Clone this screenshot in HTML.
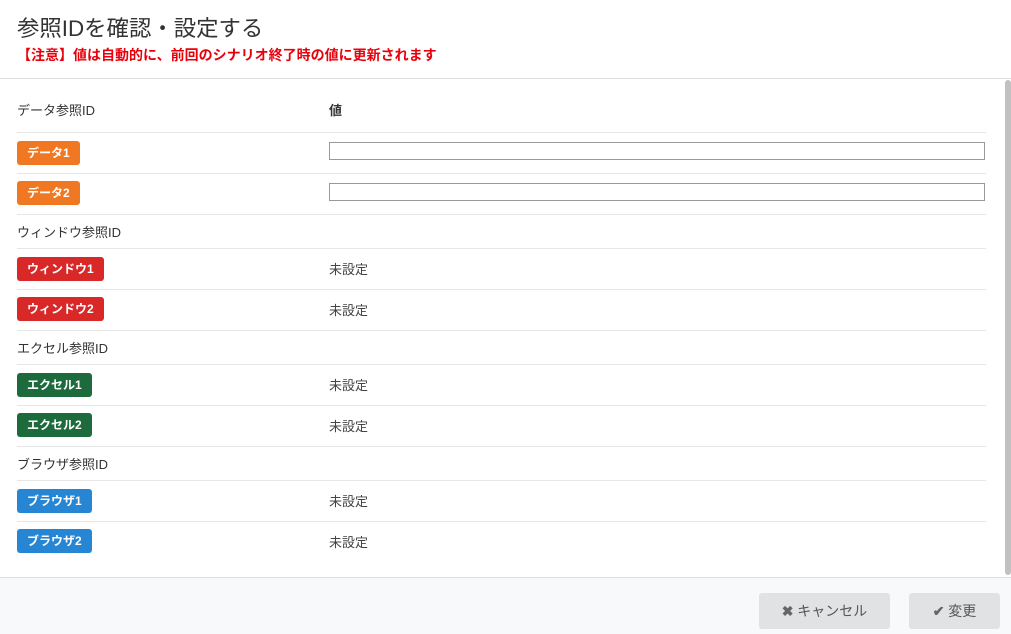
<!DOCTYPE html>
<html><head><meta charset="utf-8"><style>
*{box-sizing:border-box;margin:0;padding:0}
body{width:1011px;height:634px;overflow:hidden;background:#fff;font-family:"Liberation Sans","Noto Sans CJK JP",sans-serif;color:#333;position:relative}
.title{position:absolute;left:17px;top:11px;font-size:22.4px;color:#333}
.note{position:absolute;left:17px;top:45px;font-size:14px;font-weight:bold;color:#e8000b}
.hdr{position:absolute;left:0;top:78px;width:1011px;border-top:1px solid #dcdcdc}
.row{position:absolute;left:17px;width:969px;border-bottom:1px solid #e6e6e6;font-size:13px}
.row .v{position:absolute;left:312px;color:#444}
.badge{position:absolute;left:0;height:24px;line-height:24px;padding:0 10px;border-radius:3px;color:#fff;font-size:12px;font-weight:bold}
.o{background:#f07822}.r{background:#d92828}.g{background:#1d6b3d}.b{background:#2686d3}
.ta{position:absolute;left:312px;width:656px;height:18px;border:1px solid #999;background:#fff}
.foot{position:absolute;left:0;top:577px;width:1011px;height:57px;background:#f8f9fa;border-top:1px solid #dcdcdc}
.btn{position:absolute;top:15px;height:36px;background:#e1e2e4;border-radius:3px;font-size:14px;color:#555;text-align:center;line-height:36px}
.sb{position:absolute;left:1005px;top:80px;width:6px;height:495px;background:#c1c1c1;border-radius:3px}
</style></head><body>
<div class="title">参照IDを確認・設定する</div>
<div class="note">【注意】値は自動的に、前回のシナリオ終了時の値に更新されます</div>
<div class="hdr"></div>
<div class="row" style="top:90px;height:43px"><span style="position:absolute;top:10px">データ参照ID</span><span class="v" style="top:10px;font-weight:bold;color:#333">値</span></div>
<div class="row" style="top:133px;height:41px"><span class="badge o" style="top:8px">データ1</span><div class="ta" style="top:9px"></div></div>
<div class="row" style="top:174px;height:41px"><span class="badge o" style="top:7px">データ2</span><div class="ta" style="top:9px"></div></div>
<div class="row" style="top:215px;height:34px"><span style="position:absolute;top:7px">ウィンドウ参照ID</span></div>
<div class="row" style="top:249px;height:41px"><span class="badge r" style="top:8px">ウィンドウ1</span><span class="v" style="top:10px">未設定</span></div>
<div class="row" style="top:290px;height:41px"><span class="badge r" style="top:7px">ウィンドウ2</span><span class="v" style="top:10px">未設定</span></div>
<div class="row" style="top:331px;height:34px"><span style="position:absolute;top:7px">エクセル参照ID</span></div>
<div class="row" style="top:365px;height:41px"><span class="badge g" style="top:8px">エクセル1</span><span class="v" style="top:10px">未設定</span></div>
<div class="row" style="top:406px;height:41px"><span class="badge g" style="top:7px">エクセル2</span><span class="v" style="top:10px">未設定</span></div>
<div class="row" style="top:447px;height:34px"><span style="position:absolute;top:7px">ブラウザ参照ID</span></div>
<div class="row" style="top:481px;height:41px"><span class="badge b" style="top:8px">ブラウザ1</span><span class="v" style="top:10px">未設定</span></div>
<div class="row" style="top:522px;height:41px;border-bottom:none"><span class="badge b" style="top:7px">ブラウザ2</span><span class="v" style="top:10px">未設定</span></div>
<div class="sb"></div>
<div class="foot">
<div class="btn" style="left:759px;width:131px"><b style="color:#666">✖</b> キャンセル</div>
<div class="btn" style="left:909px;width:91px"><b style="color:#666">✔</b> 変更</div>
</div>
</body></html>
